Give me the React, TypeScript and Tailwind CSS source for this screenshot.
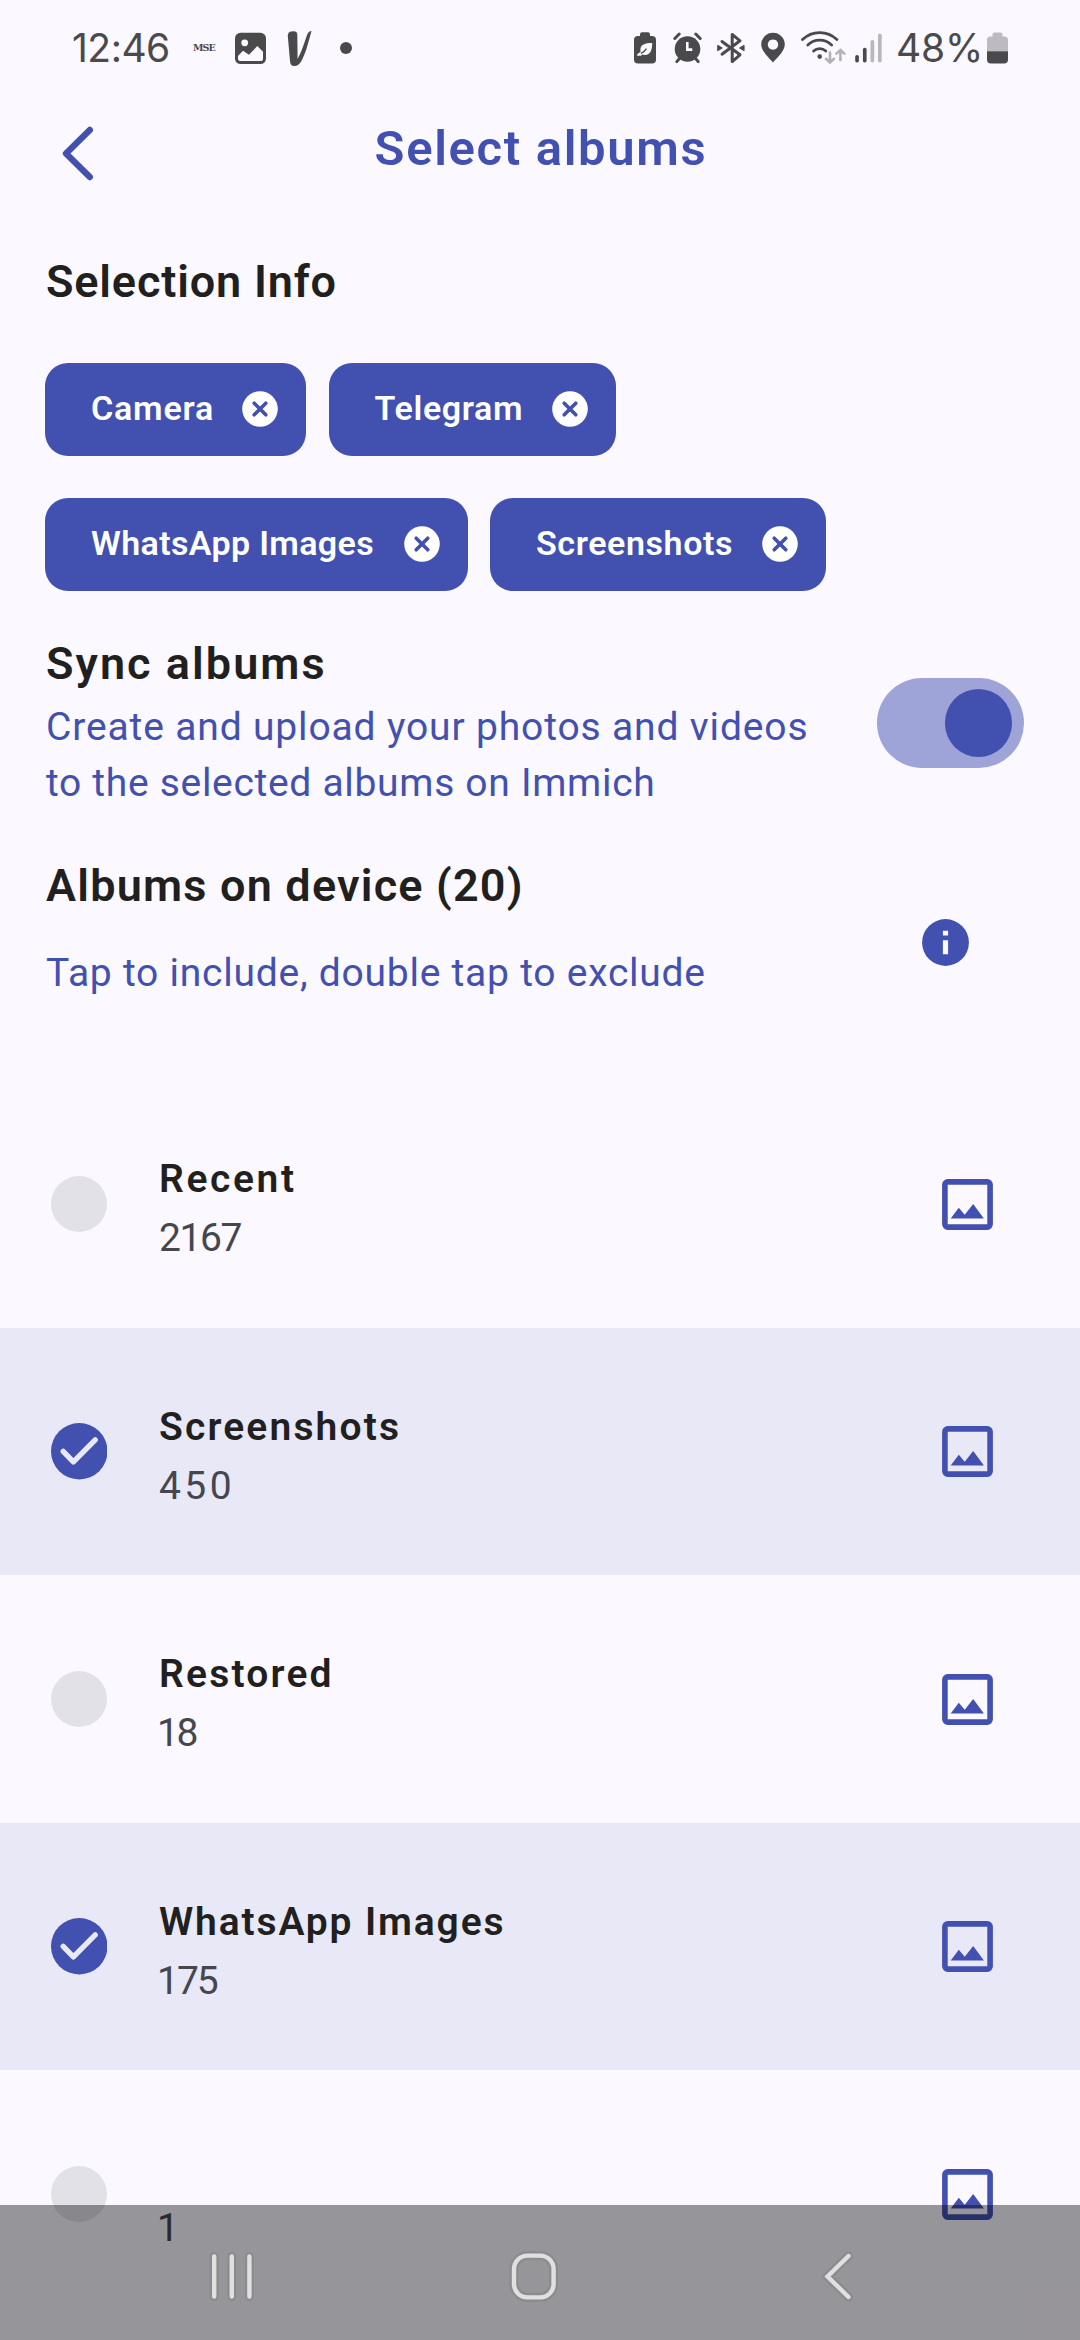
const chips = [
  { label: "Camera", width: "w-[261px]", tracking: "tracking-[0.8px]" },
  { label: "Telegram", width: "w-[287px]", tracking: "tracking-[0.64px]" },
  { label: "WhatsApp Images", width: "w-[422.5px]", tracking: "tracking-[0.36px]" },
  { label: "Screenshots", width: "w-[335.5px]", tracking: "tracking-[0.59px]" },
];

const albums = [
  { name: "Recent", count: "2167", selected: false, nameCls: "tracking-[2.63px]", countCls: "tracking-[-1.4px]" },
  { name: "Screenshots", count: "450", selected: true, nameCls: "tracking-[2.14px]", countCls: "tracking-[3.4px]" },
  { name: "Restored", count: "18", selected: false, nameCls: "tracking-[2.2px]", countCls: "-ml-[2px] tracking-[-2.4px]" },
  { name: "WhatsApp Images", count: "175", selected: true, nameCls: "tracking-[1.86px]", countCls: "-ml-[2px] tracking-[-2px]" },
  { name: "", count: "1", selected: false, nameCls: "", countCls: "-ml-[2px]" },
];

function StatusBar() {
  return (
    <div className="flex h-24 shrink-0 items-center pl-[72px] font-['Inter',sans-serif] text-[39px] leading-[48px] text-[#4a494c]">
      <span className="w-[97px] whitespace-nowrap tracking-[-0.5px]">12:46</span>
      <span className="ml-6 w-[22px] whitespace-nowrap font-['DejaVu_Serif',serif] text-[9.5px] font-bold leading-4 tracking-[-0.9px]">MSE</span>
      <svg className="ml-5 h-10 w-[31px]" viewBox="0 0 31 40">
        <rect y="4.8" width="31" height="31.2" rx="5.5" fill="#4a494c" />
        <circle cx="9.7" cy="14.8" r="3.4" fill="#fbf8ff" />
        <path d="M3 28 L8 22.8 L14 26.8 L22.3 18 L28 23.7 V31 a2 2 0 0 1 -2 2 H5 a2 2 0 0 1 -2 -2Z" fill="#fbf8ff" />
      </svg>
      <svg className="ml-[21px] h-10 w-[25px]" viewBox="0 0 25 40">
        <path d="M.8 8 C.8 4 3 3.5 6 3.2 C9 3 10.5 4 10.3 7 L10.6 31 C14 25 17 16 20 7 C21 4 22.5 3.2 24.5 3 C22 12 19 24 16.3 29 C14 35 11 38 8 38 C4 38 3.3 36 3 33Z" fill="#4a494c" />
      </svg>
      <span className="ml-7 size-3 rounded-full bg-[#4a494c]" />
      <svg className="ml-[282px] h-10 w-[22px]" viewBox="0 0 22 40">
        <rect y="8" width="22" height="27.5" rx="4" fill="#4a494c" />
        <rect x="6" y="4.3" width="10" height="7" rx="2" fill="#4a494c" />
        <path d="M18.2 15 C11 15 6.4 16.5 6.4 22 L6.4 24 L3.2 26.2 V27.8 H7 L8 26.6 C15 28.6 18.2 24 18.2 15Z" fill="#fbf8ff" />
        <path d="M6.8 25.4 C9 24.8 11 23 12.4 20.6" fill="none" stroke="#4a494c" strokeWidth="1.3" />
      </svg>
      <svg className="ml-[17px] h-10 w-[29px]" viewBox="0 0 29 40" fill="none" stroke="#4a494c" strokeLinecap="round" strokeWidth="3">
        <circle cx="14.5" cy="21" r="12.8" fill="#4a494c" stroke="none" />
        <path d="M1.8 10.5 L6.2 6 M27.2 10.5 L22.8 6" />
        <path d="M3.8 33.6 L6 31 M25.2 33.6 L23 31" />
        <path d="M14.3 14 V21.6 H19.3" stroke="#fbf8ff" strokeWidth="2.6" strokeLinecap="butt" />
      </svg>
      <svg className="ml-[15px] h-10 w-[28px]" viewBox="0 0 28 40">
        <path d="M5 13.5 L23 26.8 L15.2 33.6 V6.4 L23 12.8 L5 26.2" fill="none" stroke="#4a494c" strokeWidth="3" strokeLinejoin="round" strokeLinecap="round" />
        <path d="M.8 17.5 L5 20 L.8 22.5Z M27 17.5 L22.8 20 L27 22.5Z" fill="#4a494c" stroke="#4a494c" strokeWidth="1.2" strokeLinejoin="round" />
      </svg>
      <svg className="ml-4 h-10 w-6" viewBox="0 0 24 40">
        <path fillRule="evenodd" d="M12 34.6 C9.5 31.5 .2 23.5 .2 16.6 A11.8 11.8 0 0 1 23.8 16.6 C23.8 23.5 14.5 31.5 12 34.6Z M12 11.4 a5.2 5.2 0 1 0 .01 0Z" fill="#4a494c" />
      </svg>
      <svg className="ml-4 h-10 w-[46px]" viewBox="0 0 46 40" fill="none" strokeLinecap="round" strokeWidth="2.8">
        <g stroke="#4a494c">
          <path d="M1.5 11.6 C11 2.2 26.4 2.2 35.9 11.6" />
          <path d="M6.8 17 C13.5 10.6 23.9 10.6 30.6 17" />
          <path d="M12.6 23 C16 19.8 21.4 19.8 24.8 23" />
        </g>
        <circle cx="18.7" cy="28.6" r="2.3" fill="#4a494c" />
        <path d="M29 24.6 V34 M25 30.8 L29 34.4 L33 30.8 M39.4 32 V22.4 M35.4 25.6 L39.4 22 L43.4 25.6" stroke="#b3b1b7" strokeWidth="2.6" />
      </svg>
      <svg className="ml-2 h-10 w-[28px]" viewBox="0 0 28 40">
        <rect x=".2" y="27" width="3.7" height="7.5" rx="1.8" fill="#4a494c" />
        <rect x="7.9" y="19.8" width="3.7" height="14.7" rx="1.8" fill="#4a494c" />
        <rect x="15.5" y="12" width="3.7" height="22.5" rx="1.8" fill="#b9b7bd" />
        <rect x="23" y="5.4" width="3.7" height="29.1" rx="1.8" fill="#b9b7bd" />
      </svg>
      <span className="ml-[13px] w-[84px] whitespace-nowrap tracking-[-0.2px]">48%</span>
      <svg className="ml-[7px] h-10 w-[21px]" viewBox="0 0 21 40">
        <path d="M5.5 8.5 V6.5 a2 2 0 0 1 2 -2 h6 a2 2 0 0 1 2 2 V8.5 H17.5 a3.5 3.5 0 0 1 3.5 3.5 V23.3 H0 V12 a3.5 3.5 0 0 1 3.5 -3.5Z" fill="#bdbbc1" />
        <path d="M0 23.3 H21 V31.5 a4 4 0 0 1 -4 4 H4 a4 4 0 0 1 -4 -4Z" fill="#4a494c" />
      </svg>
    </div>
  );
}

function CancelIcon() {
  return (
    <svg className="size-[36px]" viewBox="0 0 36 36">
      <circle cx="18" cy="18" r="17.8" fill="#fff" />
      <path d="M12.2 12.2 L23.8 23.8 M23.8 12.2 L12.2 23.8" stroke="#4250af" strokeWidth="3.6" strokeLinecap="round" />
    </svg>
  );
}

function ImageIcon() {
  return (
    <svg className="size-[51px]" viewBox="0 0 51 51">
      <rect x="2.9" y="2.9" width="45.2" height="45.2" rx="2.8" fill="none" stroke="#4250af" strokeWidth="5.6" />
      <path d="M8.7 39.5 L16.8 28.7 L22.7 35.8 L31.2 25 L41.9 39.5Z" fill="#4250af" />
    </svg>
  );
}

function SelectionMark({ selected }: { selected: boolean }) {
  if (!selected) return <div className="size-[56.5px] rounded-full bg-[#e3e1e8]" />;
  return (
    <svg className="size-[56.5px]" viewBox="0 0 56.5 56.5">
      <circle cx="28.25" cy="28.25" r="28.25" fill="#4250af" />
      <path d="M12.2 28.4 L22.4 38.9 L44.2 16.9" fill="none" stroke="#e8e8f6" strokeWidth="5.4" strokeLinecap="round" strokeLinejoin="round" />
    </svg>
  );
}

function NavigationBar() {
  const shapes = (
    <>
      <path d="M34.2 24.5 V64.5 M51.8 24.5 V64.5 M69.4 24.5 V64.5" />
      <rect x="334" y="23.6" width="39.6" height="41.8" rx="13.5" />
      <path d="M668.5 24 L647.5 44.5 L668.5 65" />
    </>
  );
  return (
    <div className="absolute inset-x-0 bottom-0 flex h-[135px] items-center bg-black/40 pl-[180px]">
      <svg className="mt-[7px] h-[89px] w-[720px]" viewBox="0 0 720 89" fill="none" strokeLinecap="round">
        <g stroke="#8d8b90" strokeWidth="9">{shapes}</g>
        <g stroke="#e0e0e0" strokeWidth="4.4">{shapes}</g>
      </svg>
    </div>
  );
}

export default function App() {
  return (
    <div className="relative flex h-[2340px] w-[1080px] flex-col overflow-hidden bg-[#fbf8ff] font-['Roboto',sans-serif] text-[#221f20]">
      <StatusBar />

      <header className="grid h-[104px] shrink-0 grid-cols-[200px_1fr_200px] items-center text-[#4250af]">
        <svg className="ml-[60px] mt-[10px] h-[56px] w-[36px]" viewBox="0 0 36 56" fill="none" stroke="#4250af" strokeWidth="6.4" strokeLinecap="round" strokeLinejoin="round">
          <path d="M29.8 5 L6 28.5 L29.8 52" />
        </svg>
        <h1 className="pl-[2px] pt-[2px] text-center text-[49px] font-semibold leading-[60px] tracking-[1.66px]">Select albums</h1>
      </header>

      <h2 className="ml-[46px] mt-[55px] shrink-0 text-[45px] font-semibold leading-[53px] tracking-[0.83px]">Selection Info</h2>

      <div className="ml-[45px] mt-[54.7px] flex w-[990px] shrink-0 flex-wrap gap-x-[22.5px] gap-y-[42px]">
        {chips.map((c) => (
          <div key={c.label} className={`flex h-[93px] items-center justify-between rounded-[23px] bg-[#4250af] pl-[46px] pr-[28px] text-white ${c.width}`}>
            <span className={`-mt-[3px] whitespace-nowrap text-[34px] font-semibold leading-[40px] ${c.tracking}`}>{c.label}</span>
            <CancelIcon />
          </div>
        ))}
      </div>

      <section className="mt-[46px] flex shrink-0 items-center justify-between pl-[46px] pr-[56px]">
        <div>
          <h2 className="text-[45px] font-semibold leading-[54px] tracking-[2.05px]">Sync albums</h2>
          <p className="mt-[9.2px] whitespace-nowrap text-[39px] font-[450] leading-[55.7px] text-[#4250af]">
            <span className="block tracking-[0.85px]">Create and upload your photos and videos</span>
            <span className="block tracking-[0.69px]">to the selected albums on Immich</span>
          </p>
        </div>
        <div className="-mt-[2px] flex h-[90px] w-[147px] items-center justify-end rounded-full bg-[#9fa4d8] pr-[12px]">
          <div className="size-[67.5px] rounded-full bg-[#4250af]" />
        </div>
      </section>

      <section className="mt-[48px] flex shrink-0 items-center justify-between pl-[46px] pr-[111.5px]">
        <div>
          <h2 className="text-[45px] font-semibold leading-[54px] tracking-[1.2px]">Albums on device (20)</h2>
          <p className="mt-[31.8px] text-[39px] font-[450] leading-[56px] tracking-[0.76px] text-[#4250af]">Tap to include, double tap to exclude</p>
        </div>
        <svg className="mt-[24px] size-[47px]" viewBox="0 0 47 47">
          <circle cx="23.5" cy="23.5" r="23.4" fill="#4250af" />
          <path d="M20.9 11.8 h5.2 v4.8 h-5.2Z M20.9 21.3 h5.2 v14 h-5.2Z" fill="#fbf8ff" />
        </svg>
      </section>

      <ul className="mt-[79.4px] shrink-0">
        {albums.map((a, i) => (
          <li key={i} className={`flex h-[247.5px] items-center pl-[50.5px] pr-[87px] ${a.selected ? "bg-[#e8e8f6]" : ""}`}>
            <SelectionMark selected={a.selected} />
            <div className="ml-[52px] flex-1 pt-[9px] text-[39px] leading-[56px]">
              <div className={`h-14 font-semibold ${a.nameCls}`}>{a.name}</div>
              <div className={`mt-[3.3px] text-[#46464f] ${a.countCls}`}>{a.count}</div>
            </div>
            <ImageIcon />
          </li>
        ))}
      </ul>

      <NavigationBar />
    </div>
  );
}
